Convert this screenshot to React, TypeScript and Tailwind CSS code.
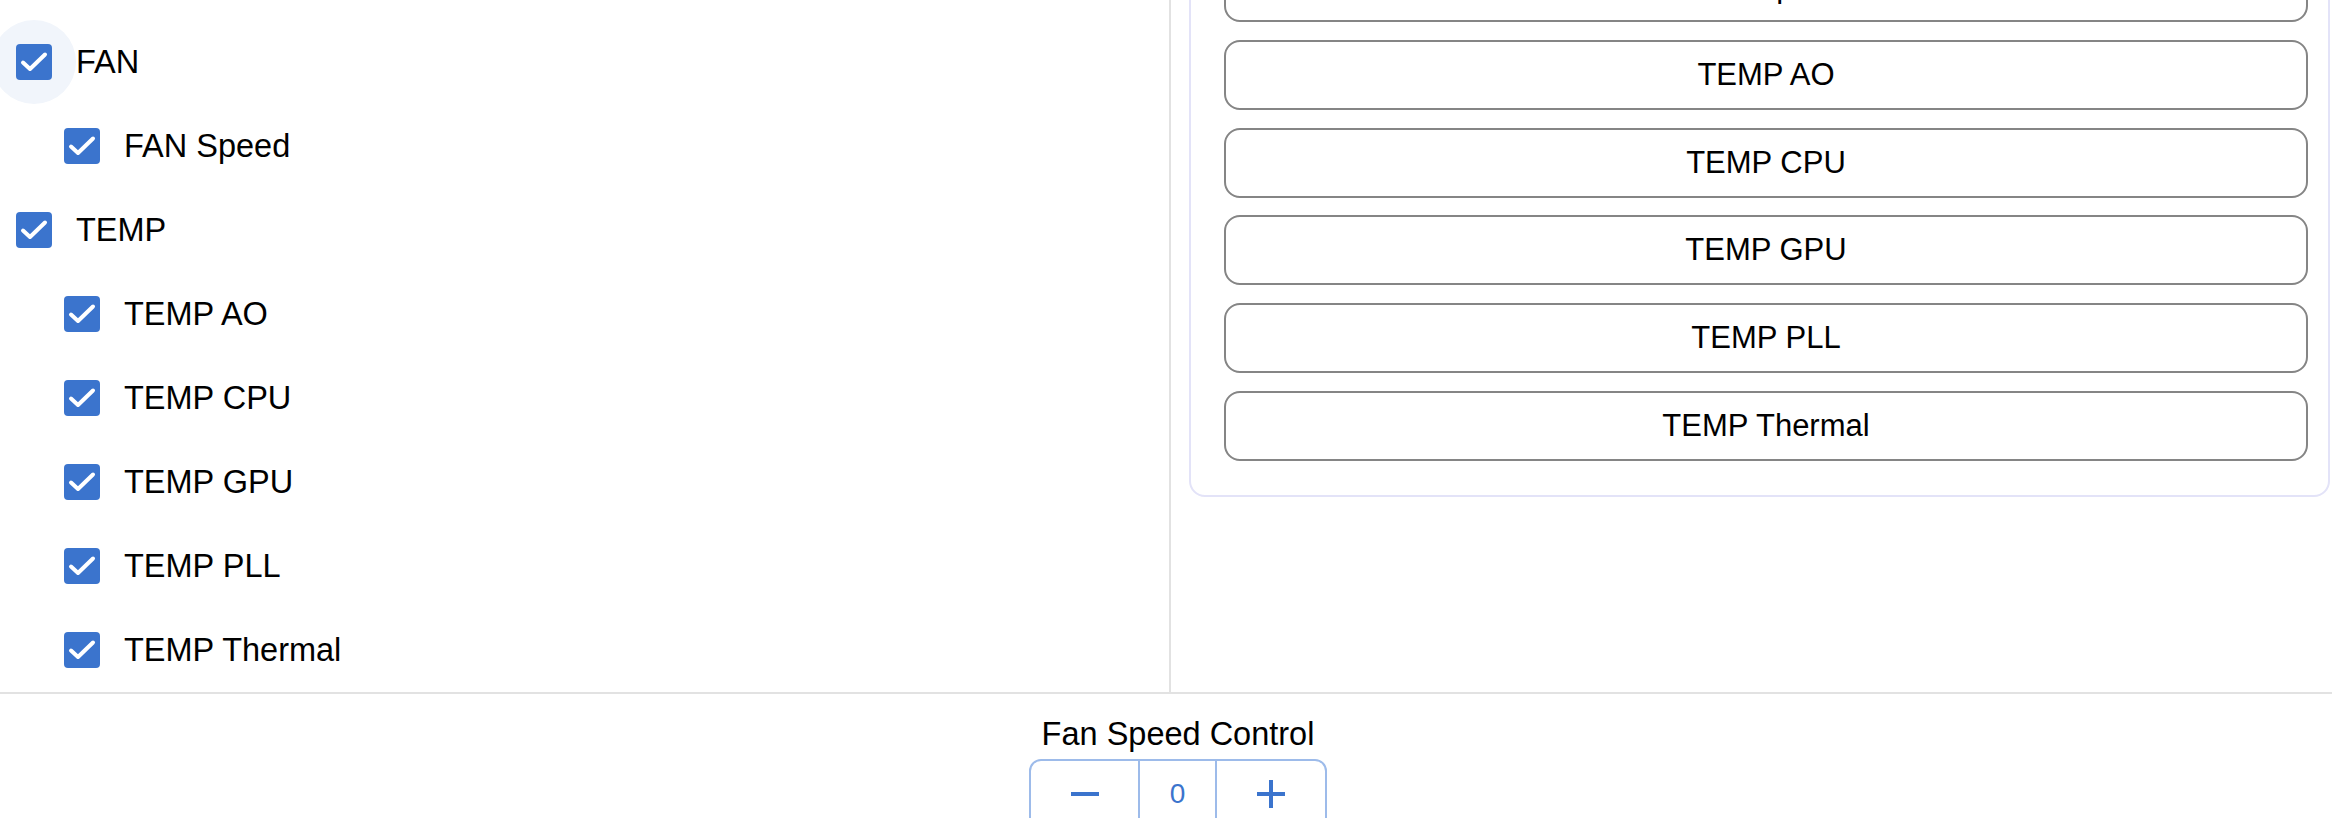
import React, { useState } from 'react';

interface SensorItem {
  label: string;
  nested: boolean;
}

const sensors: SensorItem[] = [
  { label: 'FAN', nested: false },
  { label: 'FAN Speed', nested: true },
  { label: 'TEMP', nested: false },
  { label: 'TEMP AO', nested: true },
  { label: 'TEMP CPU', nested: true },
  { label: 'TEMP GPU', nested: true },
  { label: 'TEMP PLL', nested: true },
  { label: 'TEMP Thermal', nested: true },
];

const CheckBox: React.FC = () => (
  <svg width="36" height="36" viewBox="0 0 36 36">
    <rect x="0" y="0" width="36" height="36" rx="4" fill="#3b74cd" />
    <path d="M7 18.5 L14 25 L29 10.5" fill="none" stroke="#ffffff" strokeWidth={4} strokeLinecap="round" strokeLinejoin="round" />
  </svg>
);

const App: React.FC = () => {
  const [speed, setSpeed] = useState(0);

  return (
    <div className="w-[2332px] h-[818px] overflow-hidden bg-white flex flex-col font-['Liberation_Sans',Arial,sans-serif] text-black">
      <div className="flex h-[694px] shrink-0 border-b-2 border-[#e2e2e2]">
        {/* sensor tree */}
        <div className="w-[1171px] shrink-0 border-r-2 border-[#e2e2e2] pt-[20px] flex flex-col">
          {sensors.map((s, i) => (
            <div key={s.label} className={`flex items-center h-[84px] ${s.nested ? 'pl-[48px]' : ''}`}>
              <div className={`w-[84px] h-[84px] -ml-[8px] rounded-full flex items-center justify-center ${i === 0 ? 'bg-[#f1f5fb]' : ''}`}>
                <CheckBox />
              </div>
              <span className="text-[32.5px] leading-[36px]">{s.label}</span>
            </div>
          ))}
        </div>

        {/* selected sensors */}
        <div className="flex-1 overflow-hidden">
          <div className="-mt-[80px] ml-[18px] mr-[2px] border-2 border-[#e3e3f8] rounded-[16px] pt-[30px] pb-[34px] pl-[33px] pr-[20px] flex flex-col gap-[17.75px]">
            {sensors.filter((s) => s.nested).map((s) => (
              <button
                key={s.label}
                className="h-[70px] w-full border-2 border-[#858585] rounded-[16px] bg-white text-[31px] leading-[34px] text-black"
              >
                {s.label}
              </button>
            ))}
          </div>
        </div>
      </div>

      <div className="flex flex-col items-center pl-[24px] pt-[22px]">
        <p className="text-[32.5px] leading-[36px]">Fan Speed Control</p>
        <div className="mt-[7px] flex h-[70px] border-2 border-[#9dbbea] rounded-t-[12px] text-[#3b74cd]">
          <button
            onClick={() => setSpeed(speed - 1)}
            className="w-[107px] flex items-center justify-center"
          >
            <span className="block w-[28px] h-[4px] bg-[#3b74cd]" />
          </button>
          <div className="w-[79px] border-l-2 border-r-2 border-[#9dbbea] flex items-center justify-center text-[28px]">
            {speed}
          </div>
          <button
            onClick={() => setSpeed(speed + 1)}
            className="w-[108px] flex items-center justify-center"
          >
            <svg width="28" height="28" viewBox="0 0 28 28">
              <rect x="0" y="12" width="28" height="4" fill="#3b74cd" />
              <rect x="12" y="0" width="4" height="28" fill="#3b74cd" />
            </svg>
          </button>
        </div>
      </div>
    </div>
  );
};

export default App;
